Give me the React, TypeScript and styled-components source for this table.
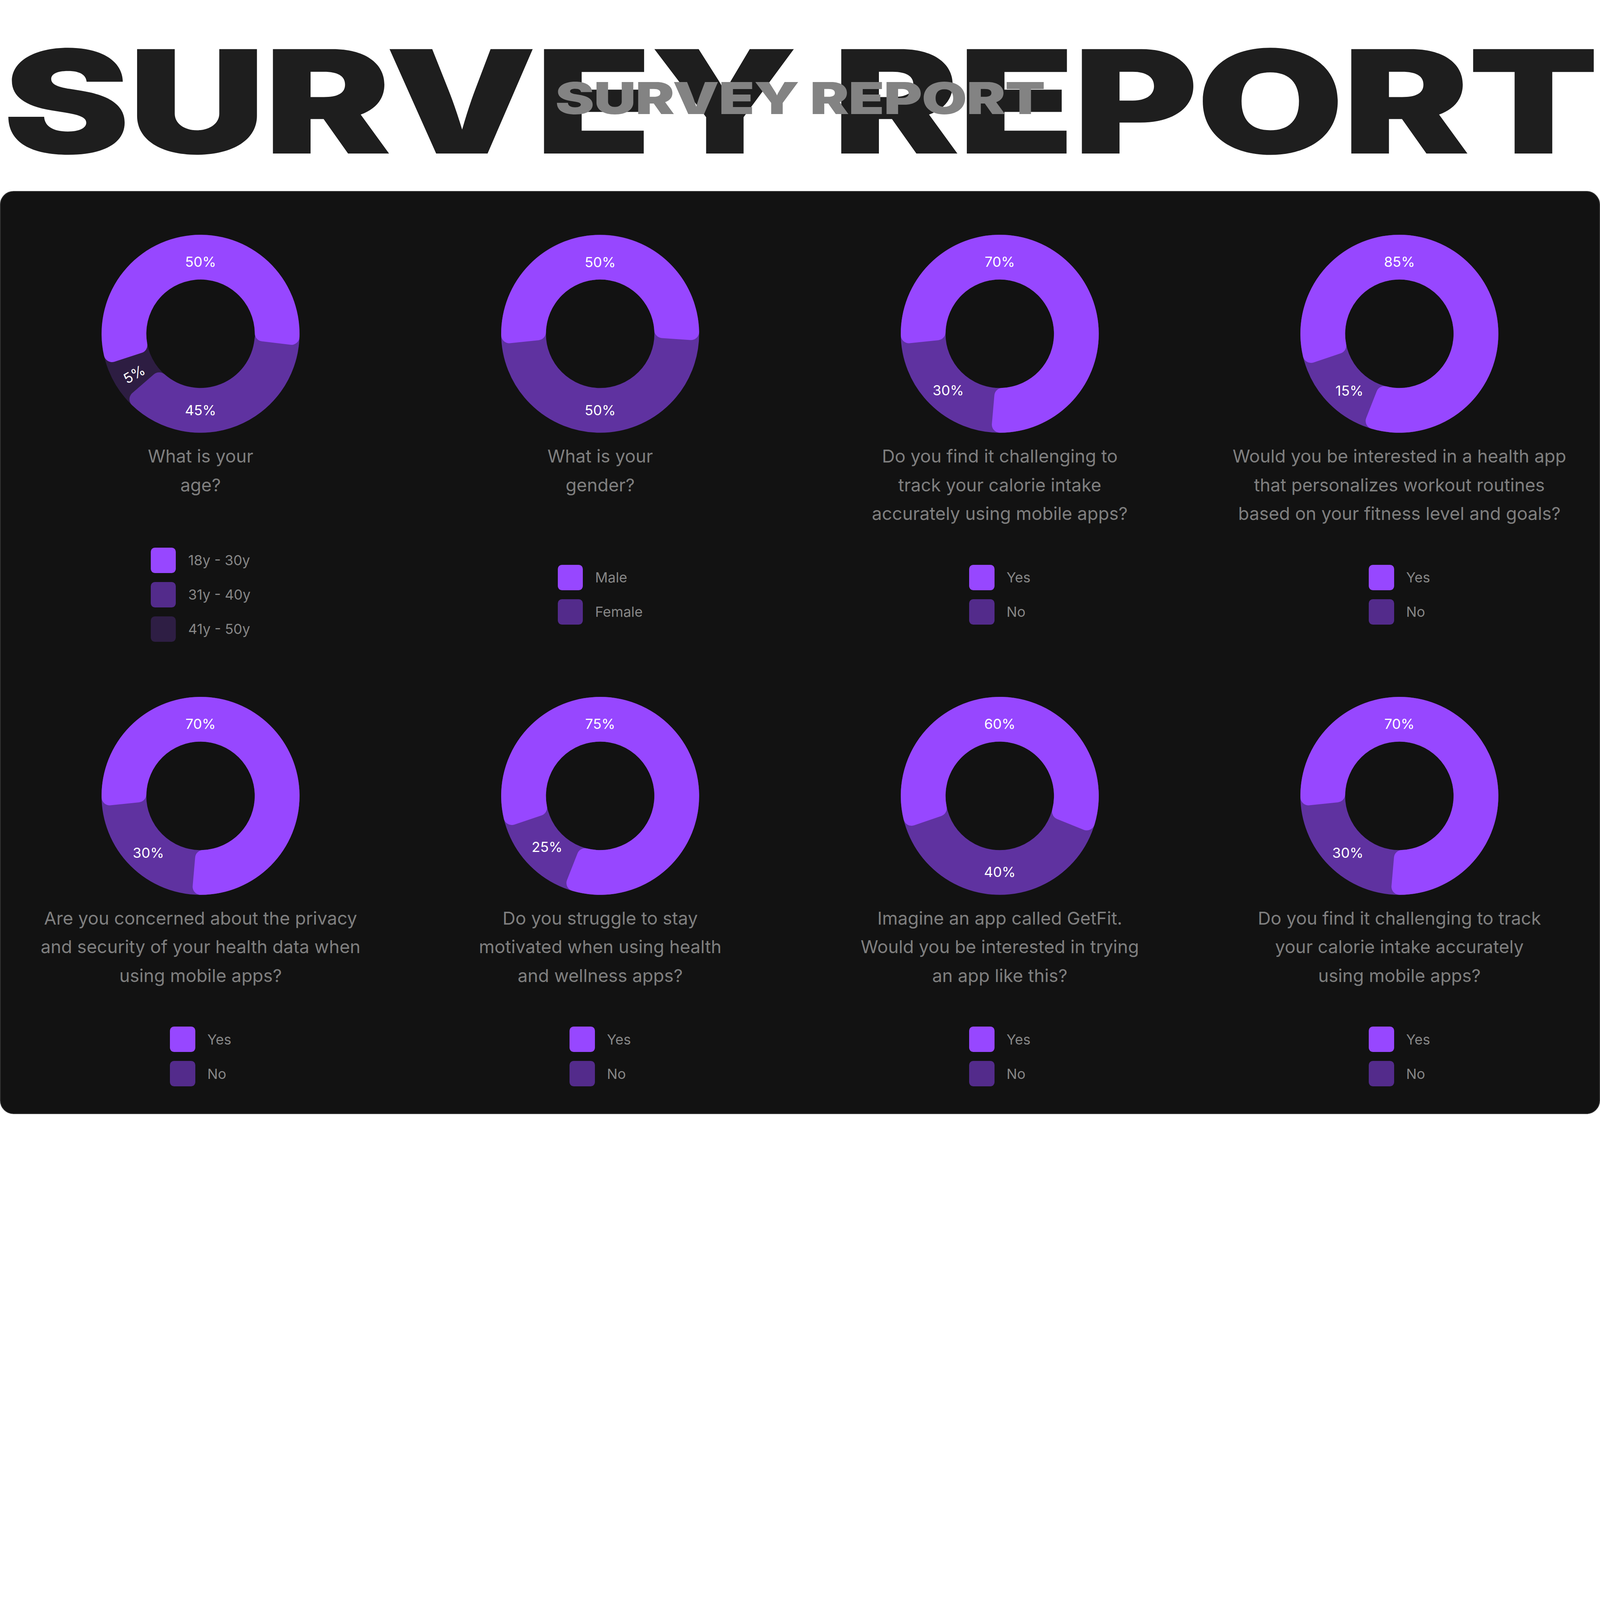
import React, { useLayoutEffect, useState } from "react";
import styled, { createGlobalStyle } from "styled-components";

const DESIGN_W = 7080;
const DESIGN_H = 4934;

const BRIGHT = "#9747FF";
const MEDIUM = "#5F32A0";
const DARK = "#2D1D42";
const MEDIUM_KEY = "#532B8B";
const DARK_KEY = "#2E1E44";

const GlobalStyle = createGlobalStyle`
  html, body {
    margin: 0;
    padding: 0;
    background: #ffffff;
    overflow: hidden;
  }
  body {
    font-family: Inter, "Noto Sans", sans-serif;
  }
`;

const Page = styled.div`
  width: ${DESIGN_W}px;
  height: ${DESIGN_H}px;
  display: flex;
  flex-direction: column;
  overflow: hidden;
`;

const Header = styled.header`
  position: relative;
  height: 845px;
  padding-top: 131px;
  box-sizing: border-box;
  overflow: hidden;
  flex-shrink: 0;
`;

const BigTitle = styled.h1`
  margin: 0;
  font-family: Inter, sans-serif;
  font-weight: 900;
  font-size: 635px;
  line-height: 1;
  letter-spacing: -0.01em;
  color: #1e1e1e;
  text-align: center;
  white-space: nowrap;
  transform: scaleX(1.33);
`;

const GhostTitle = styled.span`
  position: absolute;
  top: 337px;
  left: 0;
  right: 0;
  font-family: Inter, sans-serif;
  font-weight: 900;
  font-size: 195px;
  line-height: 1;
  letter-spacing: -0.01em;
  color: #838383;
  text-align: center;
  white-space: nowrap;
  transform: scaleX(1.33);
`;

const Board = styled.main`
  flex: 1;
  margin-bottom: 4px;
  background: #121212;
  border: 4px solid #323232;
  border-radius: 60px;
  box-sizing: border-box;
  padding-top: 191px;
  display: grid;
  grid-template-columns: repeat(4, 1fr);
  row-gap: 244px;
  align-content: start;
`;

const Cell = styled.section`
  display: flex;
  flex-direction: column;
  align-items: center;
`;

const DonutWrap = styled.div`
  position: relative;
  width: 876px;
  height: 876px;
`;

const PctLabel = styled.span<{ $x: number; $y: number; $rot: number }>`
  position: absolute;
  left: ${(p) => 438 + p.$x}px;
  top: ${(p) => 438 + p.$y}px;
  transform: translate(-50%, -50%) rotate(${(p) => p.$rot}deg);
  font-size: 62px;
  line-height: 1;
  color: #ffffff;
  white-space: nowrap;
`;

const Question = styled.p`
  margin: 40px 0 0;
  height: 381px;
  font-size: 79px;
  line-height: 127px;
  color: #7f7f7f;
  text-align: center;
  white-space: nowrap;
`;

const Legend = styled.ul`
  margin: 87px 0 0;
  padding: 0;
  list-style: none;
  height: 416px;
  display: flex;
  flex-direction: column;
  justify-content: center;
  gap: 40px;
`;

const LegendItem = styled.li`
  display: flex;
  align-items: center;
  gap: 54px;
  font-size: 62px;
  color: #868686;
`;

const Swatch = styled.span<{ $color: string }>`
  width: 112px;
  height: 112px;
  border-radius: 18px;
  background: ${(p) => p.$color};
`;

const C = 438;
const R_OUT = 438;
const R_IN = 240;
const CORNER = 36;

const pt = (rho: number, deg: number) => {
  const a = (deg * Math.PI) / 180;
  return `${(C + rho * Math.sin(a)).toFixed(2)} ${(C - rho * Math.cos(a)).toFixed(2)}`;
};

// annular sector, angles clockwise from 12 o'clock, all four corners rounded
const segmentPath = (a0: number, a1: number) => {
  const dO = (Math.asin(CORNER / (R_OUT - CORNER)) * 180) / Math.PI;
  const dI = (Math.asin(CORNER / (R_IN + CORNER)) * 180) / Math.PI;
  const lo = (R_OUT - CORNER) * Math.cos((dO * Math.PI) / 180);
  const li = (R_IN + CORNER) * Math.cos((dI * Math.PI) / 180);
  const bigO = a1 - a0 - 2 * dO > 180 ? 1 : 0;
  const bigI = a1 - a0 - 2 * dI > 180 ? 1 : 0;
  return [
    `M ${pt(lo, a0)}`,
    `A ${CORNER} ${CORNER} 0 0 1 ${pt(R_OUT, a0 + dO)}`,
    `A ${R_OUT} ${R_OUT} 0 ${bigO} 1 ${pt(R_OUT, a1 - dO)}`,
    `A ${CORNER} ${CORNER} 0 0 1 ${pt(lo, a1)}`,
    `L ${pt(li, a1)}`,
    `A ${CORNER} ${CORNER} 0 0 1 ${pt(R_IN, a1 - dI)}`,
    `A ${R_IN} ${R_IN} 0 ${bigI} 0 ${pt(R_IN, a0 + dI)}`,
    `A ${CORNER} ${CORNER} 0 0 1 ${pt(li, a0)}`,
    "Z",
  ].join(" ");
};

type Segment = { from: number; to: number; color: string };
type Label = { text: string; x: number; y: number; rot?: number };
type Chart = {
  question: string[];
  base: string;
  segments: Segment[];
  labels: Label[];
  legend: [string, string][];
};

const yesNo: [string, string][] = [
  ["Yes", BRIGHT],
  ["No", MEDIUM_KEY],
];

const charts: Chart[] = [
  {
    question: ["What is your", "age?"],
    base: DARK,
    segments: [
      { from: 88, to: 229, color: MEDIUM },
      { from: 252, to: 457, color: BRIGHT },
    ],
    labels: [
      { text: "50%", x: 0, y: -318 },
      { text: "45%", x: 0, y: 339 },
      { text: "5%", x: -293, y: 180, rot: -30 },
    ],
    legend: [
      ["18y - 30y", BRIGHT],
      ["31y - 40y", MEDIUM_KEY],
      ["41y - 50y", DARK_KEY],
    ],
  },
  {
    question: ["What is your", "gender?"],
    base: MEDIUM,
    segments: [{ from: 264, to: 454, color: BRIGHT }],
    labels: [
      { text: "50%", x: 0, y: -316 },
      { text: "50%", x: 0, y: 339 },
    ],
    legend: [
      ["Male", BRIGHT],
      ["Female", MEDIUM_KEY],
    ],
  },
  {
    question: ["Do you find it challenging to", "track your calorie intake", "accurately using mobile apps?"],
    base: MEDIUM,
    segments: [{ from: 264, to: 545, color: BRIGHT }],
    labels: [
      { text: "70%", x: 0, y: -318 },
      { text: "30%", x: -228, y: 251 },
    ],
    legend: yesNo,
  },
  {
    question: [
      "Would you be interested in a health app",
      "that personalizes workout routines",
      "based on your fitness level and goals?",
    ],
    base: MEDIUM,
    segments: [{ from: 251.5, to: 561.5, color: BRIGHT }],
    labels: [
      { text: "85%", x: 0, y: -318 },
      { text: "15%", x: -221, y: 253 },
    ],
    legend: yesNo,
  },
  {
    question: ["Are you concerned about the privacy", "and security of your health data when", "using mobile apps?"],
    base: MEDIUM,
    segments: [{ from: 264, to: 545, color: BRIGHT }],
    labels: [
      { text: "70%", x: 0, y: -316 },
      { text: "30%", x: -231, y: 253 },
    ],
    legend: yesNo,
  },
  {
    question: ["Do you struggle to stay", "motivated when using health", "and wellness apps?"],
    base: MEDIUM,
    segments: [{ from: 251.5, to: 561.5, color: BRIGHT }],
    labels: [
      { text: "75%", x: 0, y: -316 },
      { text: "25%", x: -235, y: 227 },
    ],
    legend: yesNo,
  },
  {
    question: ["Imagine an app called GetFit.", "Would you be interested in trying", "an app like this?"],
    base: MEDIUM,
    segments: [{ from: 251, to: 472, color: BRIGHT }],
    labels: [
      { text: "60%", x: 0, y: -316 },
      { text: "40%", x: 0, y: 339 },
    ],
    legend: yesNo,
  },
  {
    question: ["Do you find it challenging to track", "your calorie intake accurately", "using mobile apps?"],
    base: MEDIUM,
    segments: [{ from: 264, to: 545, color: BRIGHT }],
    labels: [
      { text: "70%", x: 0, y: -316 },
      { text: "30%", x: -228, y: 253 },
    ],
    legend: yesNo,
  },
];

const Donut = ({ chart }: { chart: Chart }) => (
  <DonutWrap>
    <svg width="876" height="876" viewBox="0 0 876 876">
      <circle cx={C} cy={C} r={(R_OUT + R_IN) / 2} fill="none" stroke={chart.base} strokeWidth={R_OUT - R_IN} />
      {chart.segments.map((s, i) => (
        <path key={i} d={segmentPath(s.from, s.to)} fill={s.color} />
      ))}
    </svg>
    {chart.labels.map((l, i) => (
      <PctLabel key={i} $x={l.x} $y={l.y} $rot={l.rot ?? 0}>
        {l.text}
      </PctLabel>
    ))}
  </DonutWrap>
);

const ChartCell = ({ chart }: { chart: Chart }) => (
  <Cell>
    <Donut chart={chart} />
    <Question>
      {chart.question.map((line, i) => (
        <React.Fragment key={i}>
          {line}
          {i < chart.question.length - 1 && <br />}
        </React.Fragment>
      ))}
    </Question>
    <Legend>
      {chart.legend.map(([name, color]) => (
        <LegendItem key={name}>
          <Swatch $color={color} />
          {name}
        </LegendItem>
      ))}
    </Legend>
  </Cell>
);

// the design is drawn at 7080x4934; fit it to whatever viewport we get
const useFitScale = () => {
  const [scale, setScale] = useState(1);
  useLayoutEffect(() => {
    const update = () =>
      setScale(Math.min(window.innerWidth / DESIGN_W, window.innerHeight / DESIGN_H));
    update();
    window.addEventListener("resize", update);
    return () => window.removeEventListener("resize", update);
  }, []);
  return scale;
};

const App = () => {
  const scale = useFitScale();
  return (
    <Page style={{ zoom: scale }}>
      <GlobalStyle />
      <Header>
        <BigTitle>SURVEY REPORT</BigTitle>
        <GhostTitle>SURVEY REPORT</GhostTitle>
      </Header>
      <Board>
        {charts.map((c, i) => (
          <ChartCell key={i} chart={c} />
        ))}
      </Board>
    </Page>
  );
};

export default App;
